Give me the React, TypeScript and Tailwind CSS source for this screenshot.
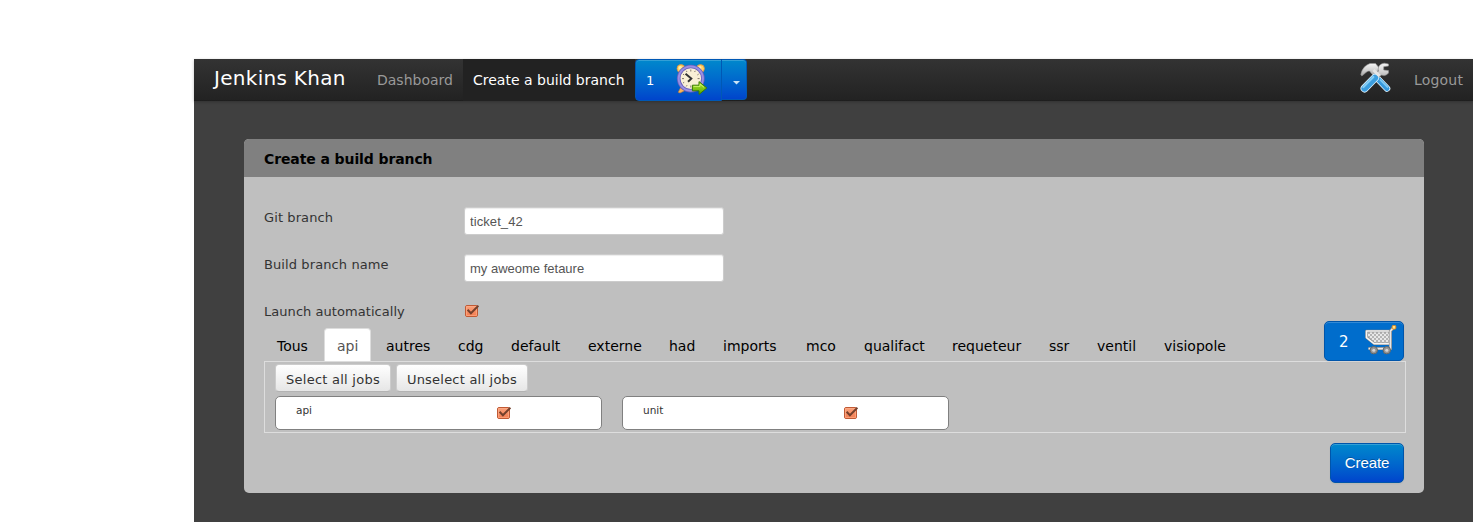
import React from "react";

const tabs = [
  { name: "Tous", width: "w-[58px]" },
  { name: "api", width: "w-[47px]" },
  { name: "autres", width: "w-[70px]" },
  { name: "cdg", width: "w-[51px]" },
  { name: "default", width: "w-[75px]" },
  { name: "externe", width: "w-[79px]" },
  { name: "had", width: "w-[52px]" },
  { name: "imports", width: "w-[81px]" },
  { name: "mco", width: "w-[56px]" },
  { name: "qualifact", width: "w-[86px]" },
  { name: "requeteur", width: "w-[95px]" },
  { name: "ssr", width: "w-[46px]" },
  { name: "ventil", width: "w-[65px]" },
  { name: "visiopole", width: "w-[88px]" },
];

function CheckBox() {
  return (
    <svg width="14" height="14" viewBox="0 0 14 14" className="block shrink-0">
      <defs>
        <linearGradient id="check-fill" x1="0" y1="0" x2="0" y2="1">
          <stop offset="0" stopColor="#f9a27c" />
          <stop offset="1" stopColor="#f47c50" />
        </linearGradient>
      </defs>
      <rect x="0.5" y="1.5" width="12" height="11" rx="1.5" fill="url(#check-fill)" stroke="#c05a35" />
      <rect x="1.5" y="2.5" width="10" height="9" fill="none" stroke="#ffb08c" strokeOpacity="0.6" />
      <path d="M2.6 5.8 L5.9 9.2 L13.4 1.6" fill="none" stroke="#74402c" strokeWidth="2" />
    </svg>
  );
}

function ClockIcon() {
  return (
    <svg width="32" height="32" viewBox="0 0 32 32" className="block shrink-0">
      <defs>
        <linearGradient id="clock-arrow" x1="0" y1="0" x2="0" y2="1">
          <stop offset="0" stopColor="#b5ea35" />
          <stop offset="1" stopColor="#57a800" />
        </linearGradient>
      </defs>
      <path d="M5 23 L2.2 28.2 L4 29 L9 26.5 Z" fill="#fbb657" stroke="#c97c2e" strokeWidth="0.6" />
      <circle cx="5" cy="4.6" r="4" fill="#ffd166" stroke="#d99238" strokeWidth="0.8" />
      <circle cx="24.4" cy="4.6" r="4" fill="#ffd166" stroke="#d99238" strokeWidth="0.8" />
      <circle cx="4.3" cy="3.8" r="1.7" fill="#fff0a5" />
      <circle cx="23.7" cy="3.8" r="1.7" fill="#fff0a5" />
      <circle cx="14.8" cy="14.6" r="12.1" fill="#f9f0d6" stroke="#6a5fbd" strokeWidth="3.6" />
      <circle cx="14.8" cy="14.6" r="12.1" fill="none" stroke="#9890e4" strokeWidth="2" />
      <path d="M14.8 5.5v2M14.8 21.5v2M6 14.6h2M21.6 14.6h2M10.3 6.8l.7 1.2M19.3 6.8l-.7 1.2M7 10.2l1.2.7M22.6 10.2l-1.2.7M7 19l1.2-.7M10.3 22.4l.7-1.2" stroke="#81786c" strokeWidth="1" />
      <path d="M9.5 9.8 L15.3 14.6 L12 17.8" fill="none" stroke="#343434" strokeWidth="2" />
      <path d="M16.4 21.2H23V17.6L30.8 24L23 30.4V26.8H16.4Z" fill="url(#clock-arrow)" stroke="#397b00" strokeLinejoin="round" />
      <path d="M17.5 22.4H24V20L28 23.3" fill="none" stroke="#d7fa7d" strokeWidth="0.8" />
    </svg>
  );
}

function ToolsIcon() {
  return (
    <svg width="32" height="32" viewBox="0 0 32 32" className="block shrink-0">
      <defs>
        <linearGradient id="tool-metal" x1="0" y1="0" x2="0" y2="1">
          <stop offset="0" stopColor="#f5f5f5" />
          <stop offset="0.55" stopColor="#cfcfcf" />
          <stop offset="1" stopColor="#a0a0a0" />
        </linearGradient>
      </defs>
      <path d="M12 9 L20 18" stroke="#d4d4d4" strokeWidth="3.4" />
      <path d="M18.8 18 L27 26.5" stroke="#e4f5ff" strokeWidth="6.6" strokeLinecap="round" />
      <path d="M18.8 18 L27 26.5" stroke="#3799dc" strokeWidth="5" strokeLinecap="round" />
      <path d="M20 17.6 L28 25.6" stroke="#83cbf2" strokeWidth="1.5" />
      <path d="M0.8 12.5 C2 7 5 3.2 10 1.5 L15.5 1.5 L18.8 5.5 L17.5 10 L12.5 12.5 L9.5 9 C6.5 9 5 11.8 1.8 14Z" fill="url(#tool-metal)" stroke="#929292" strokeWidth="0.6" />
      <path d="M13.5 14.5 L18.5 9 C17.3 5 20 1.5 24.5 1.2 L28.5 2 V4 L23.7 4.7 V8 L28.5 8.6 V11 C26 14 23 13.8 21.4 13 L17.2 17.5Z" fill="url(#tool-metal)" stroke="#929292" strokeWidth="0.6" />
      <path d="M15 15.8 L4.6 26.4" stroke="#dff2fd" strokeWidth="8" strokeLinecap="round" />
      <path d="M15 15.8 L4.6 26.4" stroke="#3b9edf" strokeWidth="6.4" strokeLinecap="round" />
      <path d="M13.3 15 L3.4 25" stroke="#86cdf5" strokeWidth="2.2" strokeLinecap="round" />
      <path d="M13.5 8 L19.5 13.8" stroke="#e5e5e5" strokeWidth="3" />
    </svg>
  );
}

function CartIcon() {
  return (
    <svg width="32" height="32" viewBox="0 0 32 32" className="block shrink-0">
      <defs>
        <pattern id="cart-mesh" x="1" y="1" width="4" height="4" patternUnits="userSpaceOnUse">
          <rect width="4" height="4" fill="#e8e8e8" />
          <rect width="2" height="2" fill="#b4b4b4" />
          <rect x="2" y="2" width="2" height="2" fill="#b4b4b4" />
        </pattern>
      </defs>
      <path d="M1.5 6H25.4V18.6H9L1.5 12.6Z" fill="url(#cart-mesh)" stroke="#858585" strokeWidth="2.6" strokeLinejoin="round" />
      <path d="M1.5 6H25.4V18.6H9L1.5 12.6Z" fill="none" stroke="#f5f5f5" strokeWidth="1.6" strokeLinejoin="round" />
      <path d="M3.5 23.6H25.4V6L28.4 2.8" fill="none" stroke="#808080" strokeWidth="3" />
      <path d="M3.5 23.6H25.4V6L28.4 2.8" fill="none" stroke="#e7e7e7" strokeWidth="1.8" />
      <circle cx="8.8" cy="25.2" r="3.7" fill="#969696" stroke="#60676a" />
      <circle cx="21.8" cy="25.2" r="3.7" fill="#969696" stroke="#60676a" />
      <circle cx="8.8" cy="25.2" r="1.5" fill="#d5d5d5" />
      <circle cx="21.8" cy="25.2" r="1.5" fill="#d5d5d5" />
      <rect x="27.2" y="0.5" width="3.6" height="3.6" rx="1" fill="#ffe08c" stroke="#e18a19" />
    </svg>
  );
}

function Job({ name }: { name: string }) {
  return (
    <div className="flex h-[34px] w-[327px] rounded-[5px] border border-[#808080] bg-white pl-5">
      <span className="w-[201px] pt-[4px] text-[10.5px] leading-[18px]">{name}</span>
      <div className="pt-[9px]"><CheckBox /></div>
    </div>
  );
}

export default function App() {
  return (
    <div className="h-[522px] overflow-hidden bg-white pt-[59px] pl-[194px] font-['DejaVu_Sans',sans-serif] text-[13px] leading-[18px] text-[#333]">
      <div className="h-[463px] bg-[#404040]">
        <header className="flex h-[42px] bg-linear-to-b from-[#333] to-[#222] text-[14px] shadow-[0_1px_3px_rgba(0,0,0,0.25),inset_0_-1px_0_rgba(0,0,0,0.1)]">
          <div className="w-[173px] pt-[9px] pl-5 text-[20px] leading-5 tracking-[0.3px] whitespace-nowrap text-white">Jenkins Khan</div>
          <div className="w-24 pt-3 pl-[10px] text-[#999]">Dashboard</div>
          <div className="w-[172px] bg-[#222] pt-3 pl-[10px] whitespace-nowrap text-white">Create a build branch</div>
          <button className="flex h-[42px] w-[87px] items-start rounded-l-[4px] border border-[#0058b5] bg-linear-to-b from-[#0088cc] to-[#0044cc] pt-[4px] pl-[10px] text-white shadow-[inset_0_1px_0_rgba(255,255,255,0.2)]">
            <span className="w-[30px] pt-[8px] text-left text-[13px]">1</span>
            <ClockIcon />
          </button>
          <button className="flex h-[41px] w-[25px] justify-center rounded-r-[4px] border border-l-0 border-[#0058b5] bg-linear-to-b from-[#0088cc] to-[#0044cc] pt-[21px] pl-[5px] shadow-[inset_0_1px_0_rgba(255,255,255,0.2)]">
            <svg width="7" height="4" viewBox="0 0 7 4"><path d="M0 0H7L3.5 3.5Z" fill="#cce3f6" /></svg>
          </button>
          <div className="ml-auto flex w-[113px] pt-[3px]">
            <div className="w-[54px]"><ToolsIcon /></div>
            <span className="pt-[9px] tracking-[0.2px] text-[#999]">Logout</span>
          </div>
        </header>
        <main className="mt-[38px] ml-[50px] h-[354px] w-[1180px] overflow-hidden rounded-[5px] bg-[#bfbfbf]">
          <h1 className="h-[38px] bg-[#808080] pt-[11px] pl-5 text-[14px] font-bold tracking-[-0.1px] text-black">Create a build branch</h1>
          <div className="pt-[30px] pl-5">
            <div className="flex h-[47px]">
              <label className="w-[200px] pt-[2px] tracking-[0.1px]">Git branch</label>
              <input defaultValue="ticket_42" className="h-7 w-[260px] rounded-[3px] border border-[#ccc] bg-white px-[5px] pt-[1px] font-['Liberation_Sans',sans-serif] text-[13px] tracking-[0.08px] text-[#555] shadow-[inset_0_1px_1px_rgba(0,0,0,0.075)]" />
            </div>
            <div className="flex h-[47px]">
              <label className="w-[200px] pt-[2px] tracking-[0.1px]">Build branch name</label>
              <input defaultValue="my aweome fetaure" className="h-7 w-[260px] rounded-[3px] border border-[#ccc] bg-white px-[5px] pt-[1px] font-['Liberation_Sans',sans-serif] text-[13px] text-[#555] shadow-[inset_0_1px_1px_rgba(0,0,0,0.075)]" />
            </div>
            <div className="flex h-5">
              <label className="w-[201px] pt-[2px] tracking-[0.05px]">Launch automatically</label>
              <div className="pt-[3px]"><CheckBox /></div>
            </div>
            <div className="flex h-10 w-[1140px] items-end">
              <nav className="flex gap-[2px] text-[14px] text-black">
                {tabs.map(({ name, width }) => (
                  <span key={name} className={`${width} h-[33px] border border-b-0 pt-[8px] pl-3 whitespace-nowrap ${name === "api" ? "rounded-t-[4px] border-[#ddd] bg-white text-[#555]" : "border-transparent"}`}>{name}</span>
                ))}
              </nav>
              <button className="ml-auto flex h-10 w-20 rounded-[5px] border border-[#0055aa] bg-[#006dcc] pt-[3px] pl-[14px] text-[15px] text-white shadow-[inset_0_1px_0_rgba(255,255,255,0.2),0_1px_2px_rgba(0,0,0,0.05)]">
                <span className="w-[26px] pt-[8px] text-left">2</span>
                <CartIcon />
              </button>
            </div>
            <section className="h-[72px] w-[1142px] border border-[#ddd] pt-[2px] pl-[10px]">
              <div className="flex gap-[5px]">
                <button className="h-7 w-[116px] rounded-[4px] border border-[#ccc] border-b-[#b3b3b3] bg-linear-to-b from-white to-[#e6e6e6] pt-[3px] text-[13px] tracking-[0.25px] whitespace-nowrap">Select all jobs</button>
                <button className="h-7 w-[132px] rounded-[4px] border border-[#ccc] border-b-[#b3b3b3] bg-linear-to-b from-white to-[#e6e6e6] pt-[3px] text-[13px] tracking-[0.22px] whitespace-nowrap">Unselect all jobs</button>
              </div>
              <div className="mt-1 flex gap-5"><Job name="api" /><Job name="unit" /></div>
            </section>
            <div className="flex w-[1140px] justify-end pt-[10px]">
              <button className="h-10 w-[74px] rounded-[5px] border border-[#0055aa] bg-linear-to-b from-[#0088cc] to-[#0044cc] font-['Liberation_Sans',sans-serif] text-[15px] tracking-[-0.1px] text-white [text-shadow:0_-1px_0_rgba(0,0,0,0.25)] shadow-[inset_0_1px_0_rgba(255,255,255,0.2),0_1px_2px_rgba(0,0,0,0.05)]">Create</button>
            </div>
          </div>
        </main>
      </div>
    </div>
  );
}
